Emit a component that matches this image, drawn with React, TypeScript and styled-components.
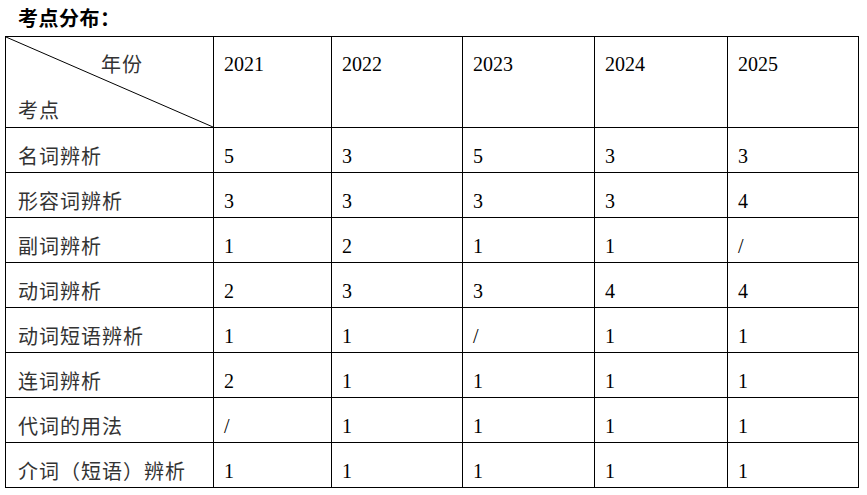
import styled, { createGlobalStyle } from "styled-components";

type Row = { name: string; counts: string[] };

const years = ["2021", "2022", "2023", "2024", "2025"];

const rows: Row[] = [
  { name: "名词辨析", counts: ["5", "3", "5", "3", "3"] },
  { name: "形容词辨析", counts: ["3", "3", "3", "3", "4"] },
  { name: "副词辨析", counts: ["1", "2", "1", "1", "/"] },
  { name: "动词辨析", counts: ["2", "3", "3", "4", "4"] },
  { name: "动词短语辨析", counts: ["1", "1", "/", "1", "1"] },
  { name: "连词辨析", counts: ["2", "1", "1", "1", "1"] },
  { name: "代词的用法", counts: ["/", "1", "1", "1", "1"] },
  { name: "介词（短语）辨析", counts: ["1", "1", "1", "1", "1"] },
];

const colWidths = [208, 118, 131, 132, 133, 131];

export default function App() {
  return (
    <>
      <GlobalStyle />
      <Page>
        <Title>考点分布：</Title>
        <Table>
          <colgroup>
            {colWidths.map((w, i) => (
              <col key={i} style={{ width: w }} />
            ))}
          </colgroup>
          <thead>
            <tr>
              <CornerCell>
                <Diagonal viewBox="0 0 100 100" preserveAspectRatio="none">
                  <line
                    x1="0"
                    y1="0"
                    x2="100"
                    y2="100"
                    stroke="#000"
                    strokeWidth="1"
                    vectorEffect="non-scaling-stroke"
                  />
                </Diagonal>
                <CornerLabels>
                  <YearLabel>年份</YearLabel>
                  <PointLabel>考点</PointLabel>
                </CornerLabels>
              </CornerCell>
              {years.map((y) => (
                <YearCell key={y}>{y}</YearCell>
              ))}
            </tr>
          </thead>
          <tbody>
            {rows.map((r) => (
              <tr key={r.name}>
                <NameCell>{r.name}</NameCell>
                {r.counts.map((c, i) => (
                  <NumCell key={i}>{c}</NumCell>
                ))}
              </tr>
            ))}
          </tbody>
        </Table>
      </Page>
    </>
  );
}

const GlobalStyle = createGlobalStyle`
  html, body {
    margin: 0;
    padding: 0;
    background: #fff;
  }
  body {
    font-family: "Liberation Serif", "Noto Sans CJK SC", serif;
    color: #000;
  }
`;

const Page = styled.div`
  padding: 6px 0 0 5px;
`;

const Title = styled.div`
  font-family: "Noto Sans CJK SC", sans-serif;
  font-weight: 700;
  font-size: 20px;
  line-height: 24px;
  letter-spacing: 0.5px;
  padding-left: 13px;
  margin-bottom: 6px;
`;

const Table = styled.table`
  border-collapse: collapse;
  table-layout: fixed;
  width: 853px;
`;

const Cell = styled.td`
  border: 1px solid #000;
  padding: 0 10px;
  vertical-align: top;
  font-size: 20px;
  line-height: 24px;
`;

const CornerCell = styled(Cell).attrs({ as: "th" })`
  position: relative;
  height: 90px;
  padding: 0;
  font-weight: 400;
  text-align: left;
`;

const Diagonal = styled.svg`
  position: absolute;
  inset: 0;
  width: 100%;
  height: 100%;
`;

const CornerLabels = styled.div`
  display: flex;
  flex-direction: column;
  justify-content: space-between;
  height: 90px;
  padding: 15px 12px 5px;
  box-sizing: border-box;
  font-family: "Noto Sans CJK SC", sans-serif;
  font-size: 20px;
  letter-spacing: 1px;
  color: #333;
`;

const YearLabel = styled.span`
  padding-left: 83px;
`;

const PointLabel = styled.span``;

const YearCell = styled(Cell).attrs({ as: "th" })`
  font-weight: 400;
  text-align: left;
  padding-top: 15px;
`;

const NameCell = styled(Cell)`
  height: 45px;
  box-sizing: border-box;
  padding: 16px 8px 0 12px;
  font-family: "Noto Sans CJK SC", sans-serif;
  font-size: 20px;
  letter-spacing: 1px;
  color: #333;
  white-space: nowrap;
`;

const NumCell = styled(Cell)`
  padding-top: 16px;
`;
